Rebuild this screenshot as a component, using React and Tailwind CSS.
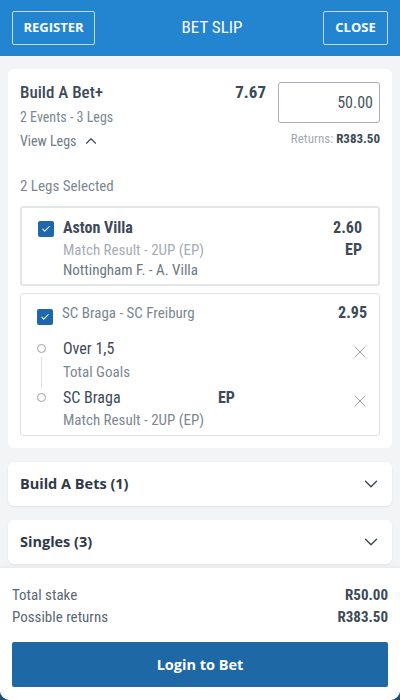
import { ChevronDown, ChevronUp, X, Check } from 'lucide-react';

const cond = { fontFamily: '"Roboto Condensed", "Liberation Sans Narrow", Roboto, sans-serif' };

function Checkbox() {
  return (
    <div className="w-4 h-4 rounded-[2px] bg-[#1f66ad] flex items-center justify-center shrink-0">
      <Check size={10} strokeWidth={2.5} className="text-white" />
    </div>
  );
}

function LegDot() {
  return <div className="w-[9px] h-[9px] rounded-full border border-[#9aa3ab] bg-white shrink-0" />;
}

function Accordion({ title }) {
  return (
    <div className="bg-white rounded-md shadow-[0_1px_2px_rgba(0,0,0,0.08)] h-[44px] px-3 flex items-center justify-between shrink-0">
      <span className="font-['Open_Sans',sans-serif] font-bold text-[14.5px] text-[#2f3a46]">{title}</span>
      <ChevronDown size={22} strokeWidth={1.5} className="text-[#3a4654] mr-[-2px]" />
    </div>
  );
}

export default function App() {
  return (
    <div className="w-[400px] h-[700px] bg-[#1c4f7c] text-[#3b4754]" style={cond}>
      <div className="h-full flex flex-col rounded-b-[10px] overflow-hidden bg-white">
        {/* header */}
        <div className="h-14 bg-[#2384d0] flex items-center justify-between px-3 shrink-0">
          <button className="h-[34px] w-[83px] border border-white/70 rounded-[2px] text-white text-[13px] font-bold font-['Open_Sans',sans-serif]">
            REGISTER
          </button>
          <span className="text-white text-[17px] ml-[6px]">BET SLIP</span>
          <button className="h-[34px] w-[65px] border border-white/70 rounded-[2px] text-white text-[13px] font-bold font-['Open_Sans',sans-serif]">
            CLOSE
          </button>
        </div>

        {/* scroll area */}
        <div className="flex-1 bg-[#f2f4f6] px-2 pt-[13px] flex flex-col gap-[14px] overflow-hidden">
          <div className="bg-white rounded-md px-3 pt-[13px] pb-3 shrink-0">
            <div className="flex justify-between">
              <div>
                <div className="text-[17px] font-medium text-[#3d4a58] leading-5">Build A Bet+</div>
                <div className="text-[14px] text-[#7c8791] mt-[5px] leading-5">2 Events - 3 Legs</div>
                <div className="text-[14px] text-[#6f7a85] mt-[4px] leading-5 flex items-center gap-[6px]">
                  View Legs <ChevronUp size={18} strokeWidth={1.5} className="text-[#3b4754]" />
                </div>
              </div>
              <div className="flex gap-3">
                <div className="text-[17px] font-bold text-[#3d4a58] leading-5">7.67</div>
                <div className="flex flex-col items-end">
                  <div className="w-[102px] h-[41px] border border-[#a9b0b7] rounded-[3px] flex items-center justify-end px-[6px] text-[16px] text-[#4a5561]">
                    50.00
                  </div>
                  <div className="text-[13px] mt-[6px]">
                    <span className="text-[#a3abb3]">Returns: </span>
                    <span className="font-bold text-[#3d4a58]">R383.50</span>
                  </div>
                </div>
              </div>
            </div>

            <div className="text-[15px] text-[#7c8791] mt-[25px] leading-5">2 Legs Selected</div>

            <div className="mt-[10px] border-2 border-[#e4e7ea] rounded-[3px] px-4 pt-[9px] pb-[4px] flex gap-[9px]">
              <div className="pt-[4px]"><Checkbox /></div>
              <div className="flex-1">
                <div className="flex justify-between text-[16px] font-bold text-[#3d4a58] leading-5 mt-[1px]">
                  <span>Aston Villa</span><span>2.60</span>
                </div>
                <div className="flex justify-between text-[15px] leading-5 mt-[2px]">
                  <span className="text-[#a6adb4]">Match Result - 2UP (EP)</span>
                  <span className="font-bold text-[#3d4a58] text-[16px]">EP</span>
                </div>
                <div className="text-[15px] text-[#6c7782] leading-5">Nottingham F. - A. Villa</div>
              </div>
            </div>

            <div className="mt-[7px] border border-[#dfe3e7] rounded-[3px] pl-4 pr-3 pt-[9px] pb-[5px]">
              <div className="flex gap-[9px]">
                <div className="pt-[6px]"><Checkbox /></div>
                <div className="flex-1 flex justify-between leading-5">
                  <span className="text-[15px] text-[#7c8791]">SC Braga - SC Freiburg</span>
                  <span className="text-[16px] font-bold text-[#3d4a58]">2.95</span>
                </div>
              </div>
              <div className="flex mt-[14px]">
                <div className="w-[9px] flex flex-col items-center pt-[5px] mr-[17px]">
                  <LegDot />
                  <div className="w-[1px] h-[32px] my-[4px] bg-[#dfe3e7]" />
                  <LegDot />
                </div>
                <div className="flex-1">
                  <div className="flex justify-between">
                    <div>
                      <div className="text-[16px] text-[#3d4a58] leading-5">Over 1,5</div>
                      <div className="text-[15px] text-[#7c8791] leading-5 mt-[3px]">Total Goals</div>
                    </div>
                    <X size={20} strokeWidth={1.2} className="text-[#9aa3ab] mt-[3px] mr-[-3px]" />
                  </div>
                  <div className="flex justify-between mt-[6px]">
                    <div>
                      <div className="flex text-[16px] leading-5">
                        <span className="w-[155px] text-[#3d4a58]">SC Braga</span>
                        <span className="font-bold text-[#3d4a58]">EP</span>
                      </div>
                      <div className="text-[15px] text-[#7c8791] leading-5 mt-[2px]">Match Result - 2UP (EP)</div>
                    </div>
                    <X size={20} strokeWidth={1.2} className="text-[#9aa3ab] mt-[3px] mr-[-3px]" />
                  </div>
                </div>
              </div>
            </div>
          </div>

          <Accordion title="Build A Bets (1)" />
          <Accordion title="Singles (3)" />
        </div>

        {/* footer */}
        <div className="h-[132px] shrink-0 bg-white px-3 pt-[16px] shadow-[0_-1px_3px_rgba(0,0,0,0.05)]">
          <div className="flex justify-between text-[15px] leading-[22px]">
            <span className="text-[#5a6672]">Total stake</span>
            <span className="font-bold text-[#3d4a58]">R50.00</span>
          </div>
          <div className="flex justify-between text-[15px] leading-[22px]">
            <span className="text-[#5a6672]">Possible returns</span>
            <span className="font-bold text-[#3d4a58]">R383.50</span>
          </div>
          <button className="mt-[14px] w-full h-[45px] bg-[#1e68a5] rounded-[2px] text-white font-bold text-[14.5px] font-['Open_Sans',sans-serif]">
            Login to Bet
          </button>
        </div>
      </div>
    </div>
  );
}
